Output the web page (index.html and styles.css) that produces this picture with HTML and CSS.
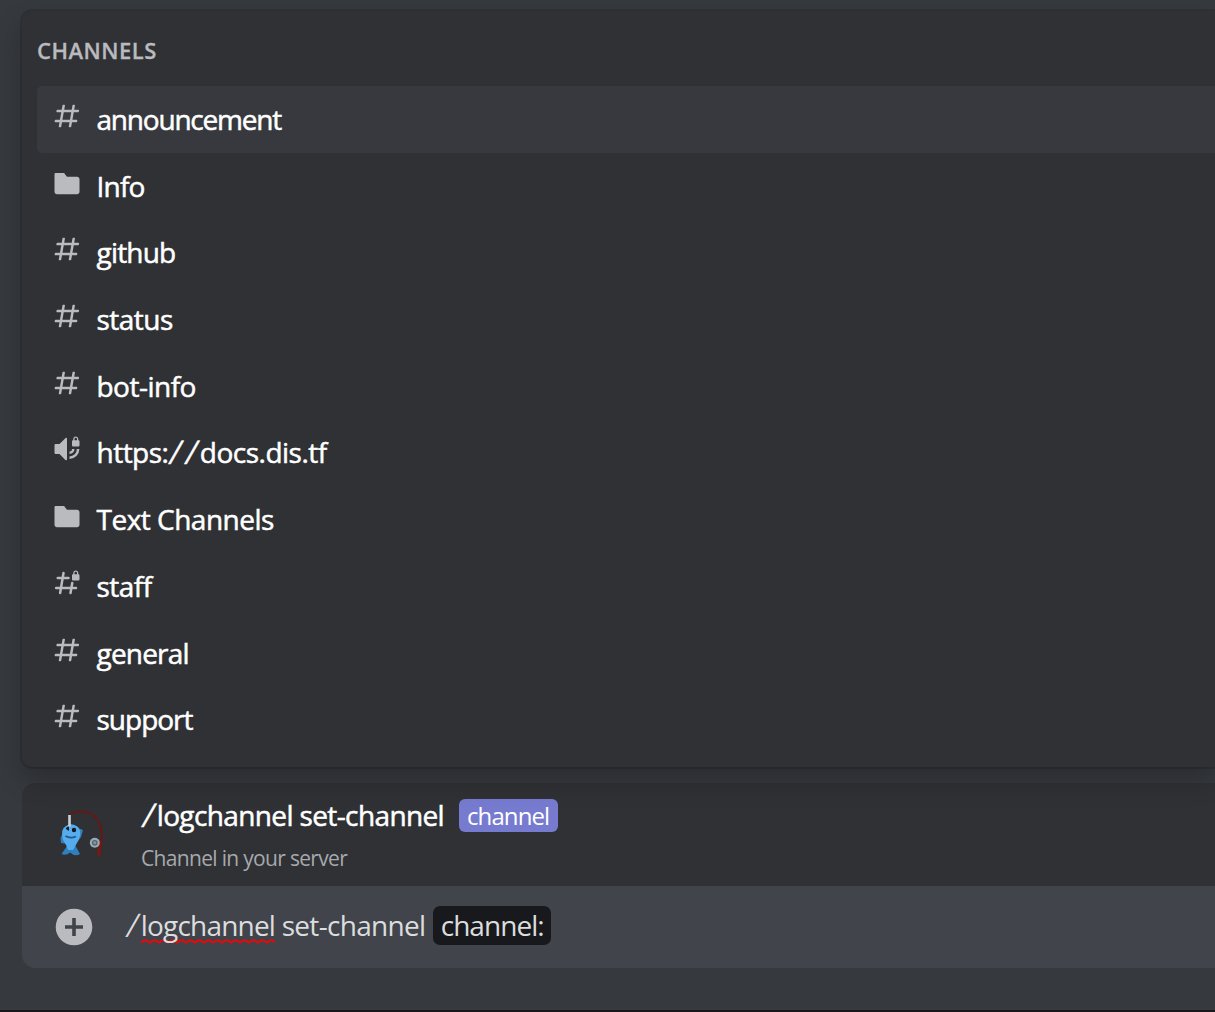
FILE: index.html
```html
<!DOCTYPE html>
<html lang="en">
<head>
<meta charset="utf-8">
<title>Channels</title>
<link rel="stylesheet" href="styles.css">
</head>
<body>
<svg class="defs" aria-hidden="true">
  <symbol id="hash" viewBox="0 0 24 24"><path fill="currentColor" fill-rule="evenodd" d="M5.88657 21C5.57547 21 5.3399 20.7189 5.39427 20.4126L6 17H2.59511C2.28449 17 2.04905 16.7198 2.10259 16.4138L2.27759 15.4138C2.31946 15.1746 2.52722 15 2.77011 15H6.35L7.41 9H4.00511C3.69449 9 3.45905 8.71977 3.51259 8.41381L3.68759 7.41381C3.72946 7.17456 3.93722 7 4.18011 7H7.76L8.39677 3.41262C8.43914 3.17391 8.64664 3 8.88907 3H9.87344C10.1845 3 10.4201 3.28107 10.3657 3.58738L9.76 7H15.76L16.3968 3.41262C16.4391 3.17391 16.6466 3 16.8891 3H17.8734C18.1845 3 18.4201 3.28107 18.3657 3.58738L17.76 7H21.1649C21.4755 7 21.711 7.28023 21.6574 7.58619L21.4824 8.58619C21.4406 8.82544 21.2328 9 20.9899 9H17.41L16.35 15H19.7549C20.0655 15 20.301 15.2802 20.2474 15.5862L20.0724 16.5862C20.0306 16.8254 19.8228 17 19.5799 17H16L15.3632 20.5874C15.3209 20.8261 15.1134 21 14.8709 21H13.8866C13.5755 21 13.3399 20.7189 13.3943 20.4126L14 17H8L7.36325 20.5874C7.32088 20.8261 7.11337 21 6.87094 21H5.88657ZM9.41045 9L8.35045 15H14.3504L15.4104 9H9.41045Z"/></symbol>
  <symbol id="lock" viewBox="0 0 24 24"><path fill="currentColor" fill-rule="evenodd" d="M21.025 5V4C21.025 2.88 20.05 2 19 2S17 2.88 17 4V5C16.4477 5 16 5.44772 16 6V9C16 9.55228 16.4477 10 17 10H21C21.5523 10 22 9.55228 22 9V5.975C22 5.43652 21.5635 5 21.025 5ZM20 5H18V4C18 3.42857 18.4667 3 19 3S20 3.42857 20 4V5Z"/></symbol>
  <symbol id="hash-locked" viewBox="0 0 24 24"><path fill="none" stroke="currentColor" stroke-width="2" stroke-linecap="round" stroke-linejoin="round" d="M9.2 4L6.5 20M4.6 8H13.2M3.3 16H19.2M16.2 12L14.8 20"/><use href="#lock"/></symbol>
  <symbol id="voice-locked" viewBox="0 0 24 24"><path fill="currentColor" d="M10.7 3.3L6 8H3C2.45 8 2 8.45 2 9V15C2 15.55 2.45 16 3 16H6L10.7 20.7C11.2 21.2 12 20.8 12 20.1V3.9C12 3.2 11.2 2.8 10.7 3.3Z"/><path fill="none" stroke="currentColor" stroke-width="2" d="M17 12A3 3 0 0 1 14 15M20.9 12A6.9 6.9 0 0 1 14 18.9"/><use href="#lock"/></symbol>
  <symbol id="folder" viewBox="0 0 24 24"><path fill="currentColor" d="M20 7H12L10.553 5.106C10.214 4.428 9.521 4 8.764 4H3C2.447 4 2 4.447 2 5V19C2 20.104 2.895 21 4 21H20C21.104 21 22 20.104 22 19V9C22 7.895 21.104 7 20 7Z"/></symbol>
</svg>
<main class="chat">
  <section class="popup">
    <h2 class="heading">CHANNELS</h2>
    <div class="row selected"><svg class="icon"><use href="#hash"/></svg><span class="name tighter">announcement</span></div>
    <div class="row"><svg class="icon"><use href="#folder"/></svg><span class="name">Info</span></div>
    <div class="row"><svg class="icon"><use href="#hash"/></svg><span class="name">github</span></div>
    <div class="row"><svg class="icon"><use href="#hash"/></svg><span class="name loose">status</span></div>
    <div class="row"><svg class="icon"><use href="#hash"/></svg><span class="name loose">bot-info</span></div>
    <div class="row"><svg class="icon"><use href="#voice-locked"/></svg><span class="name url">https:<span class="slash">/</span><span class="slash">/</span>docs.dis.tf</span></div>
    <div class="row"><svg class="icon"><use href="#folder"/></svg><span class="name loose">Text Channels</span></div>
    <div class="row"><svg class="icon"><use href="#hash-locked"/></svg><span class="name loose">staff</span></div>
    <div class="row"><svg class="icon"><use href="#hash"/></svg><span class="name">general</span></div>
    <div class="row"><svg class="icon"><use href="#hash"/></svg><span class="name tight">support</span></div>
  </section>
  <section class="composer">
    <div class="command">
      <svg class="avatar" viewBox="0 0 50 50">
        <path d="M12 6C25 1 37 4 42 17C45 25 44 38 41 48" fill="none" stroke="#601b18" stroke-width="2.2"/>
        <path d="M42 32L40.600 48" stroke="#6d1d16" stroke-width="3.6"/>
        <path d="M9 38L3.5 46Q8 48 12 44.500Q17 49 22 46L17 37Z" fill="#2f7fbd"/>
        <path d="M5 25L2.500 30L3 35L9 36M20 20L25 22L23 29L18 36" fill="#347fb8"/>
        <path d="M8 18Q14 14 20 19Q24 24 21 31Q18 37 15 42H10Q8 36 5 32Q2 21 8 18Z" fill="#55acee"/>
        <path d="M8 20L11 18V23L8 21" fill="#17202a"/>
        <circle cx="16" cy="22" r="2.200" fill="#111820"/>
        <path d="M7.500 28Q12 31 18 28.500" fill="none" stroke="#245985" stroke-width="1.800"/>
        <path d="M11.500 7V18.500" stroke="#ccd3d8" stroke-width="2.600"/>
        <circle cx="36.800" cy="34.700" r="5" fill="#99aab5"/>
        <circle cx="36.800" cy="34.700" r="2.200" fill="#8293a0" stroke="#52616c" stroke-width="1.200"/>
      </svg>
      <div class="details">
        <div class="signature"><span class="title"><span class="slash">/</span>logchannel set-channel</span><span class="tag">channel</span></div>
        <div class="description">Channel in your server</div>
      </div>
    </div>
    <div class="input">
      <svg class="add" viewBox="0 0 38 38"><circle cx="19" cy="19" r="18.300" fill="#b9bbbe"/><path d="M19 10V28M10 19H28" stroke="#40444b" stroke-width="3.600"/></svg>
      <div class="typed"><span class="slash">/</span><span class="misspelled">logchannel</span><span class="rest">set-channel</span><span class="option">channel:</span></div>
    </div>
  </section>
</main>
</body>
</html>
```
FILE: styles.css
```css
* { box-sizing: border-box; }
body { margin: 0; background: #36393e; font-family: "Open Sans", "Noto Sans", sans-serif; }
.defs { display: none; }
.chat { height: 1012px; padding: 11px 0 0 22px; overflow: hidden; border-bottom: 2px solid #1c171b; }
.popup { position: relative; z-index: 1; height: 756px; padding: 0 0 0 15px; background: #2f3135; border-radius: 10px 0 0 10px; box-shadow: 0 0 0 1.67px rgba(4,4,5,.15), 0 13px 27px rgba(0,0,0,.24); }
.heading { height: 75px; margin: 0; padding-top: 24px; font-size: 22px; line-height: 30px; font-weight: 600; letter-spacing: .5px; color: #b9bbbe; -webkit-text-stroke: .3px; white-space: nowrap; }
.row { display: flex; height: 66.7px; padding: 15px 0 0 14.6px; border-radius: 5px 0 0 5px; color: #fff; }
.selected { background: #37393e; }
.icon { width: 30px; height: 30px; color: #b9bbbe; flex: none; }
.name { margin-left: 14.9px; font-size: 28px; line-height: 36.6px; letter-spacing: -.8px; -webkit-text-stroke: .5px; white-space: nowrap; }
.tighter { letter-spacing: -1.2px; }
.tight { letter-spacing: -1px; }
.loose { letter-spacing: -.5px; }
.url { letter-spacing: -.5px; }
.slash { display: inline-block; width: 15.7px; letter-spacing: 0; text-indent: 2px; transform: skewX(-14deg) scaleY(1.16); transform-origin: 50% 60%; }
.composer { margin-top: 16px; }
.command { display: flex; height: 103px; padding: 25px 0 0 36px; background: #2f3135; border-radius: 13px 0 0; }
.avatar { width: 50px; height: 50px; }
.details { margin: -12px 0 0 33px; }
.signature { display: flex; align-items: center; height: 38px; gap: 15px; white-space: nowrap; }
.title { width: 303px; font-size: 28px; line-height: 38px; letter-spacing: -.62px; -webkit-text-stroke: .5px; color: #fff; }
.tag { width: 99px; height: 33px; padding: 0 8px; border-radius: 6px; background: #777bd0; color: #fff; font-size: 24px; line-height: 34px; letter-spacing: -.9px; }
.description { margin-top: 7px; font-size: 21px; line-height: 34px; letter-spacing: -.68px; color: #a7a9ad; white-space: nowrap; }
.input { display: flex; align-items: center; height: 82px; padding-left: 33px; background: #41444b; border-radius: 0 0 0 13px; }
.add { width: 38px; height: 38px; }
.typed { display: flex; align-items: center; margin: -3px 0 0 32px; color: #dcddde; font-size: 28px; line-height: 39px; letter-spacing: -.8px; white-space: nowrap; }
.misspelled { width: 134px; background: url("data:image/svg+xml,%3Csvg xmlns='http://www.w3.org/2000/svg' width='9' height='5'%3E%3Cpath d='M-2.25 1.2L0 3.5Q2.250 .2 4.500 2.500T9 2.500L11 1' fill='none'/%3E%3Cpath d='M-1 3.8Q0 3.8 1 3L3.200 1.500Q4.500 .8 5.800 1.500L8 3Q9 3.800 10 3.800' fill='none' stroke='red' stroke-width='1.700'/%3E%3C/svg%3E") 0 33px / 9px 5px repeat-x; }
.rest { width: 144px; margin-left: 7px; letter-spacing: -.7px; }
.option { width: 118px; height: 39px; margin-left: 7px; padding: 0 8px; background: #18191c; border-radius: 7px; letter-spacing: -.95px; }
```
